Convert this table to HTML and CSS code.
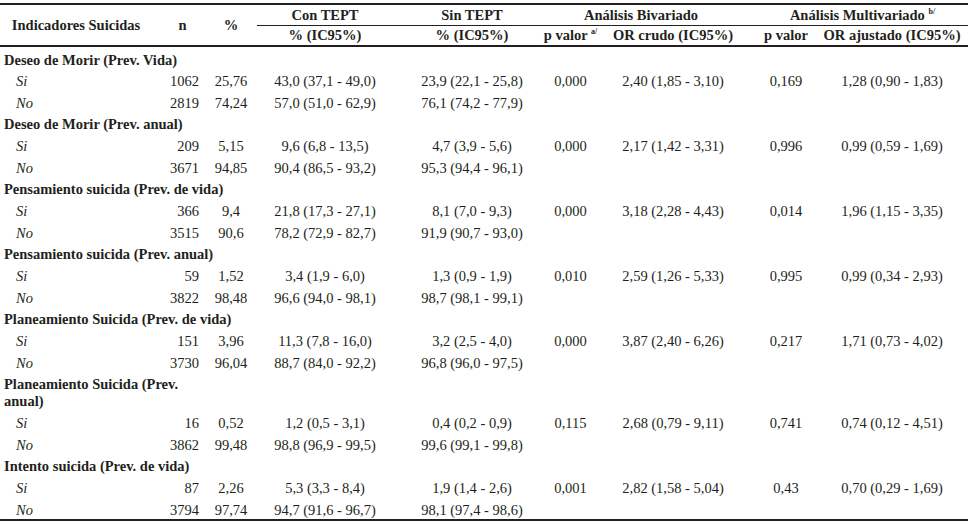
FILE: index.html
```html
<!DOCTYPE html>
<html lang="es">
<head>
<meta charset="utf-8">
<title>Indicadores Suicidas</title>
<link rel="stylesheet" href="styles.css">
</head>
<body>
<table class="tbl">
  <colgroup>
    <col class="c-label"><col class="c-n"><col class="c-pct"><col class="c-con"><col class="c-sin"><col class="c-p"><col class="c-or"><col class="c-p2"><col class="c-adj">
  </colgroup>
  <thead>
    <tr class="h1">
      <th rowspan="2" class="h-label">Indicadores Suicidas</th>
      <th rowspan="2" class="h-n">n</th>
      <th rowspan="2" class="h-pct">%</th>
      <th class="grp g-con">Con TEPT</th>
      <th class="grp g-sin">Sin TEPT</th>
      <th colspan="2" class="grp g-bi">Análisis Bivariado</th>
      <th colspan="2" class="grp g-multi">Análisis Multivariado <sup class="note">b/</sup></th>
    </tr>
    <tr class="h2">
      <th class="s-con">% (IC95%)</th>
      <th class="s-sin">% (IC95%)</th>
      <th class="s-p">p valor <sup class="note">a/</sup></th>
      <th class="s-or">OR crudo (IC95%)</th>
      <th class="s-p2">p valor</th>
      <th class="s-adj">OR ajustado (IC95%)</th>
    </tr>
  </thead>
  <tbody>
    <tr class="sec first"><td colspan="9">Deseo de Morir (Prev. Vida)</td></tr>
    <tr class="d"><td>Si</td><td>1062</td><td>25,76</td><td>43,0 (37,1 - 49,0)</td><td>23,9 (22,1 - 25,8)</td><td>0,000</td><td>2,40 (1,85 - 3,10)</td><td>0,169</td><td>1,28 (0,90 - 1,83)</td></tr>
    <tr class="d"><td>No</td><td>2819</td><td>74,24</td><td>57,0 (51,0 - 62,9)</td><td>76,1 (74,2 - 77,9)</td><td></td><td></td><td></td><td></td></tr>

    <tr class="sec"><td colspan="9">Deseo de Morir (Prev. anual)</td></tr>
    <tr class="d"><td>Si</td><td>209</td><td>5,15</td><td>9,6 (6,8 - 13,5)</td><td>4,7 (3,9 - 5,6)</td><td>0,000</td><td>2,17 (1,42 - 3,31)</td><td>0,996</td><td>0,99 (0,59 - 1,69)</td></tr>
    <tr class="d"><td>No</td><td>3671</td><td>94,85</td><td>90,4 (86,5 - 93,2)</td><td>95,3 (94,4 - 96,1)</td><td></td><td></td><td></td><td></td></tr>

    <tr class="sec"><td colspan="9">Pensamiento suicida (Prev. de vida)</td></tr>
    <tr class="d"><td>Si</td><td>366</td><td>9,4</td><td>21,8 (17,3 - 27,1)</td><td>8,1 (7,0 - 9,3)</td><td>0,000</td><td>3,18 (2,28 - 4,43)</td><td>0,014</td><td>1,96 (1,15 - 3,35)</td></tr>
    <tr class="d"><td>No</td><td>3515</td><td>90,6</td><td>78,2 (72,9 - 82,7)</td><td>91,9 (90,7 - 93,0)</td><td></td><td></td><td></td><td></td></tr>

    <tr class="sec"><td colspan="9">Pensamiento suicida (Prev. anual)</td></tr>
    <tr class="d"><td>Si</td><td>59</td><td>1,52</td><td>3,4 (1,9 - 6,0)</td><td>1,3 (0,9 - 1,9)</td><td>0,010</td><td>2,59 (1,26 - 5,33)</td><td>0,995</td><td>0,99 (0,34 - 2,93)</td></tr>
    <tr class="d"><td>No</td><td>3822</td><td>98,48</td><td>96,6 (94,0 - 98,1)</td><td>98,7 (98,1 - 99,1)</td><td></td><td></td><td></td><td></td></tr>

    <tr class="sec"><td colspan="9">Planeamiento Suicida (Prev. de vida)</td></tr>
    <tr class="d"><td>Si</td><td>151</td><td>3,96</td><td>11,3 (7,8 - 16,0)</td><td>3,2 (2,5 - 4,0)</td><td>0,000</td><td>3,87 (2,40 - 6,26)</td><td>0,217</td><td>1,71 (0,73 - 4,02)</td></tr>
    <tr class="d"><td>No</td><td>3730</td><td>96,04</td><td>88,7 (84,0 - 92,2)</td><td>96,8 (96,0 - 97,5)</td><td></td><td></td><td></td><td></td></tr>

    <tr class="sec"><td colspan="9">Planeamiento Suicida (Prev.<br>anual)</td></tr>
    <tr class="d"><td>Si</td><td>16</td><td>0,52</td><td>1,2 (0,5 - 3,1)</td><td>0,4 (0,2 - 0,9)</td><td>0,115</td><td>2,68 (0,79 - 9,11)</td><td>0,741</td><td>0,74 (0,12 - 4,51)</td></tr>
    <tr class="d"><td>No</td><td>3862</td><td>99,48</td><td>98,8 (96,9 - 99,5)</td><td>99,6 (99,1 - 99,8)</td><td></td><td></td><td></td><td></td></tr>

    <tr class="sec"><td colspan="9">Intento suicida (Prev. de vida)</td></tr>
    <tr class="d"><td>Si</td><td>87</td><td>2,26</td><td>5,3 (3,3 - 8,4)</td><td>1,9 (1,4 - 2,6)</td><td>0,001</td><td>2,82 (1,58 - 5,04)</td><td>0,43</td><td>0,70 (0,29 - 1,69)</td></tr>
    <tr class="d last"><td>No</td><td>3794</td><td>97,74</td><td>94,7 (91,6 - 96,7)</td><td>98,1 (97,4 - 98,6)</td><td></td><td></td><td></td><td></td></tr>
  </tbody>
</table>
</body>
</html>
```

FILE: styles.css
```css
html, body {
  margin: 0;
  padding: 0;
  background: #ffffff;
}

body {
  font-family: "Liberation Serif", "Times New Roman", serif;
  font-size: 14.5px;
  color: #231f20;
  padding-top: 3px;
}

.tbl {
  width: 968px;
  table-layout: fixed;
  border-collapse: collapse;
  border-spacing: 0;
}

.c-label { width: 160px; }
.c-n { width: 45px; }
.c-pct { width: 52px; }
.c-con { width: 141px; }
.c-sin { width: 135px; }
.c-p { width: 72px; }
.c-or { width: 144px; }
.c-p2 { width: 67px; }
.c-adj { width: 152px; }

.tbl th,
.tbl td {
  padding: 0;
  line-height: 17px;
  white-space: nowrap;
  vertical-align: middle;
}

.tbl th {
  font-weight: bold;
  text-align: center;
}

/* header */
.h1 th {
  border-top: 2px solid #231f20;
  height: 20px;
}
.h2 th {
  height: 19px;
  border-bottom: 2px solid #231f20;
}
.h-label {
  padding-right: 8px !important;
  border-bottom: 2px solid #231f20;
}
.h-n, .h-pct {
  border-bottom: 2px solid #231f20;
}
.grp {
  border-bottom: 1px solid #231f20;
}
.g-con, .s-con { padding-right: 5px !important; }
.g-sin, .s-sin { padding-left: 13px !important; }
.g-multi { padding-left: 8px !important; }
.s-p { padding-left: 3px !important; }
.s-or { padding-right: 8px !important; }
.s-p2 { padding-left: 7px !important; }

.note {
  font-size: 8px;
  line-height: 0;
  vertical-align: 6px;
  font-weight: bold;
}

/* body */
.sec td {
  font-weight: bold;
  padding: 2.33px 0 2.33px 4px;
  text-align: left;
}
.sec.first td {
  padding-top: 4.5px;
}

.d td {
  padding-top: 2.33px;
  padding-bottom: 2.33px;
  text-align: center;
}
.d td:nth-child(1) {
  font-style: italic;
  text-align: left;
  padding-left: 16px;
}
.d td:nth-child(2) {
  text-align: right;
  padding-right: 6px;
}
.d td:nth-child(4) { padding-right: 5px; }
.d td:nth-child(5) { padding-left: 13px; }
.d td:nth-child(6) { padding-left: 3px; }
.d td:nth-child(7) { padding-right: 8px; }
.d td:nth-child(8) { padding-left: 7px; }

.d.last td {
  padding-bottom: 0.5px;
  border-bottom: 2px solid #231f20;
}
```
